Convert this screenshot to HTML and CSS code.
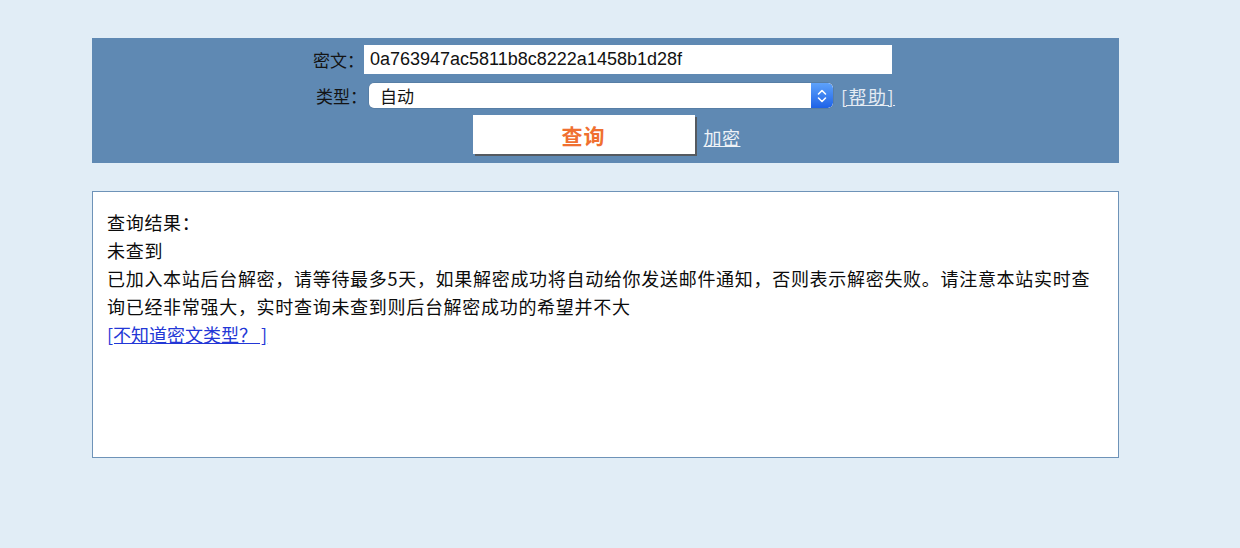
FILE: index.html
```html
<!DOCTYPE html>
<html lang="zh-CN">
<head>
<meta charset="utf-8">
<title>查询</title>
<link rel="stylesheet" href="styles.css">
</head>
<body>
<div class="wrap">
  <form class="panel" onsubmit="return false">
    <div class="row row-cipher">
      <label class="lbl">密文：</label>
      <input class="cipher" type="text" value="0a763947ac5811b8c8222a1458b1d28f">
    </div>
    <div class="row row-type">
      <label class="lbl">类型：</label>
      <div class="select">
        <span class="sel-text">自动</span>
        <span class="sel-arrow">
          <svg width="10" height="16" viewBox="0 0 10 16" aria-hidden="true">
            <path d="M1.5 6 L5 2.5 L8.5 6" fill="none" stroke="#fff" stroke-width="1.6" stroke-linecap="round" stroke-linejoin="round"/>
            <path d="M1.5 10 L5 13.5 L8.5 10" fill="none" stroke="#fff" stroke-width="1.6" stroke-linecap="round" stroke-linejoin="round"/>
          </svg>
        </span>
      </div>
      <a class="help" href="#">[帮助]</a>
    </div>
    <div class="row row-btn">
      <button class="query" type="button">查询</button>
      <a class="enc" href="#">加密</a>
    </div>
  </form>
  <div class="result">
    <p class="line">查询结果：</p>
    <p class="line">未查到</p>
    <p class="line">已加入本站后台解密，请等待最多5天，如果解密成功将自动给你发送邮件通知，否则表示解密失败。请注意本站实时查询已经非常强大，实时查询未查到则后台解密成功的希望并不大</p>
    <p class="line"><a class="type-link" href="#">[不知道密文类型？ ]</a></p>
  </div>
</div>
</body>
</html>
```

FILE: styles.css
```css
html, body {
  margin: 0;
  padding: 0;
}

body {
  background: #e1edf6;
  font-family: "Noto Sans CJK SC", "Liberation Sans", sans-serif;
  color: #1a1a1a;
  width: 1240px;
  height: 548px;
  overflow: hidden;
}

.wrap {
  width: 1027px;
  margin-left: 92px;
  padding-top: 38px;
}

.panel {
  margin: 0;
  background: #5f89b3;
  height: 125px;
  box-sizing: border-box;
  padding-top: 7px;
  display: flex;
  flex-direction: column;
  align-items: center;
}

.row {
  display: flex;
  align-items: center;
  justify-content: center;
}

.row-cipher {
  padding-right: 6px;
}

.lbl {
  font-size: 17px;
  line-height: 20px;
  color: #141414;
  white-space: nowrap;
}

.cipher {
  margin-left: 0;
  width: 528px;
  height: 29px;
  box-sizing: border-box;
  border: none;
  outline: none;
  padding: 0 6px;
  background: #fff;
  font-family: "Liberation Sans", sans-serif;
  font-size: 18px;
  color: #111;
}

.row-type {
  margin-top: 9px;
}

.select {
  margin-left: 2px;
  width: 464px;
  height: 25px;
  background: #fff;
  border-radius: 5px;
  display: flex;
  align-items: center;
  justify-content: space-between;
  overflow: hidden;
  box-shadow: 0 0 0 0.5px rgba(0,0,0,0.15);
}

.sel-text {
  padding-left: 11px;
  font-size: 17px;
  line-height: 20px;
  color: #141414;
}

.sel-arrow {
  width: 22px;
  height: 25px;
  background: linear-gradient(#5ea2fa, #1e63e8);
  border-radius: 0 5px 5px 0;
  display: flex;
  align-items: center;
  justify-content: center;
}

.help {
  margin-left: 8px;
  font-size: 18px;
  line-height: 20px;
  color: #e4ebf3;
  text-decoration: underline;
  letter-spacing: 1.5px;
}

.row-btn {
  margin-top: 7px;
  padding-left: 2px;
}

.query {
  width: 222px;
  height: 39px;
  border: none;
  background: #fff;
  box-shadow: 2px 2px 0 #555a60;
  font-family: "Noto Sans CJK SC", sans-serif;
  font-size: 21px;
  font-weight: bold;
  letter-spacing: 1px;
  color: #f07030;
  padding: 0;
  cursor: pointer;
}

.enc {
  margin-left: 9px;
  font-size: 18px;
  line-height: 20px;
  letter-spacing: 0.5px;
  color: #eef2f7;
  text-decoration: underline;
  margin-top: 4px;
}

.result {
  margin-top: 28px;
  height: 267px;
  box-sizing: border-box;
  background: #fff;
  border: 1px solid #6e93b8;
  padding: 16px 14px;
}

.line {
  margin: 0;
  font-size: 18px;
  line-height: 28px;
  letter-spacing: 0.7px;
  color: #0c0c0c;
}

.type-link {
  color: #2337d6;
  text-decoration: underline;
  letter-spacing: 0px;
}
```
